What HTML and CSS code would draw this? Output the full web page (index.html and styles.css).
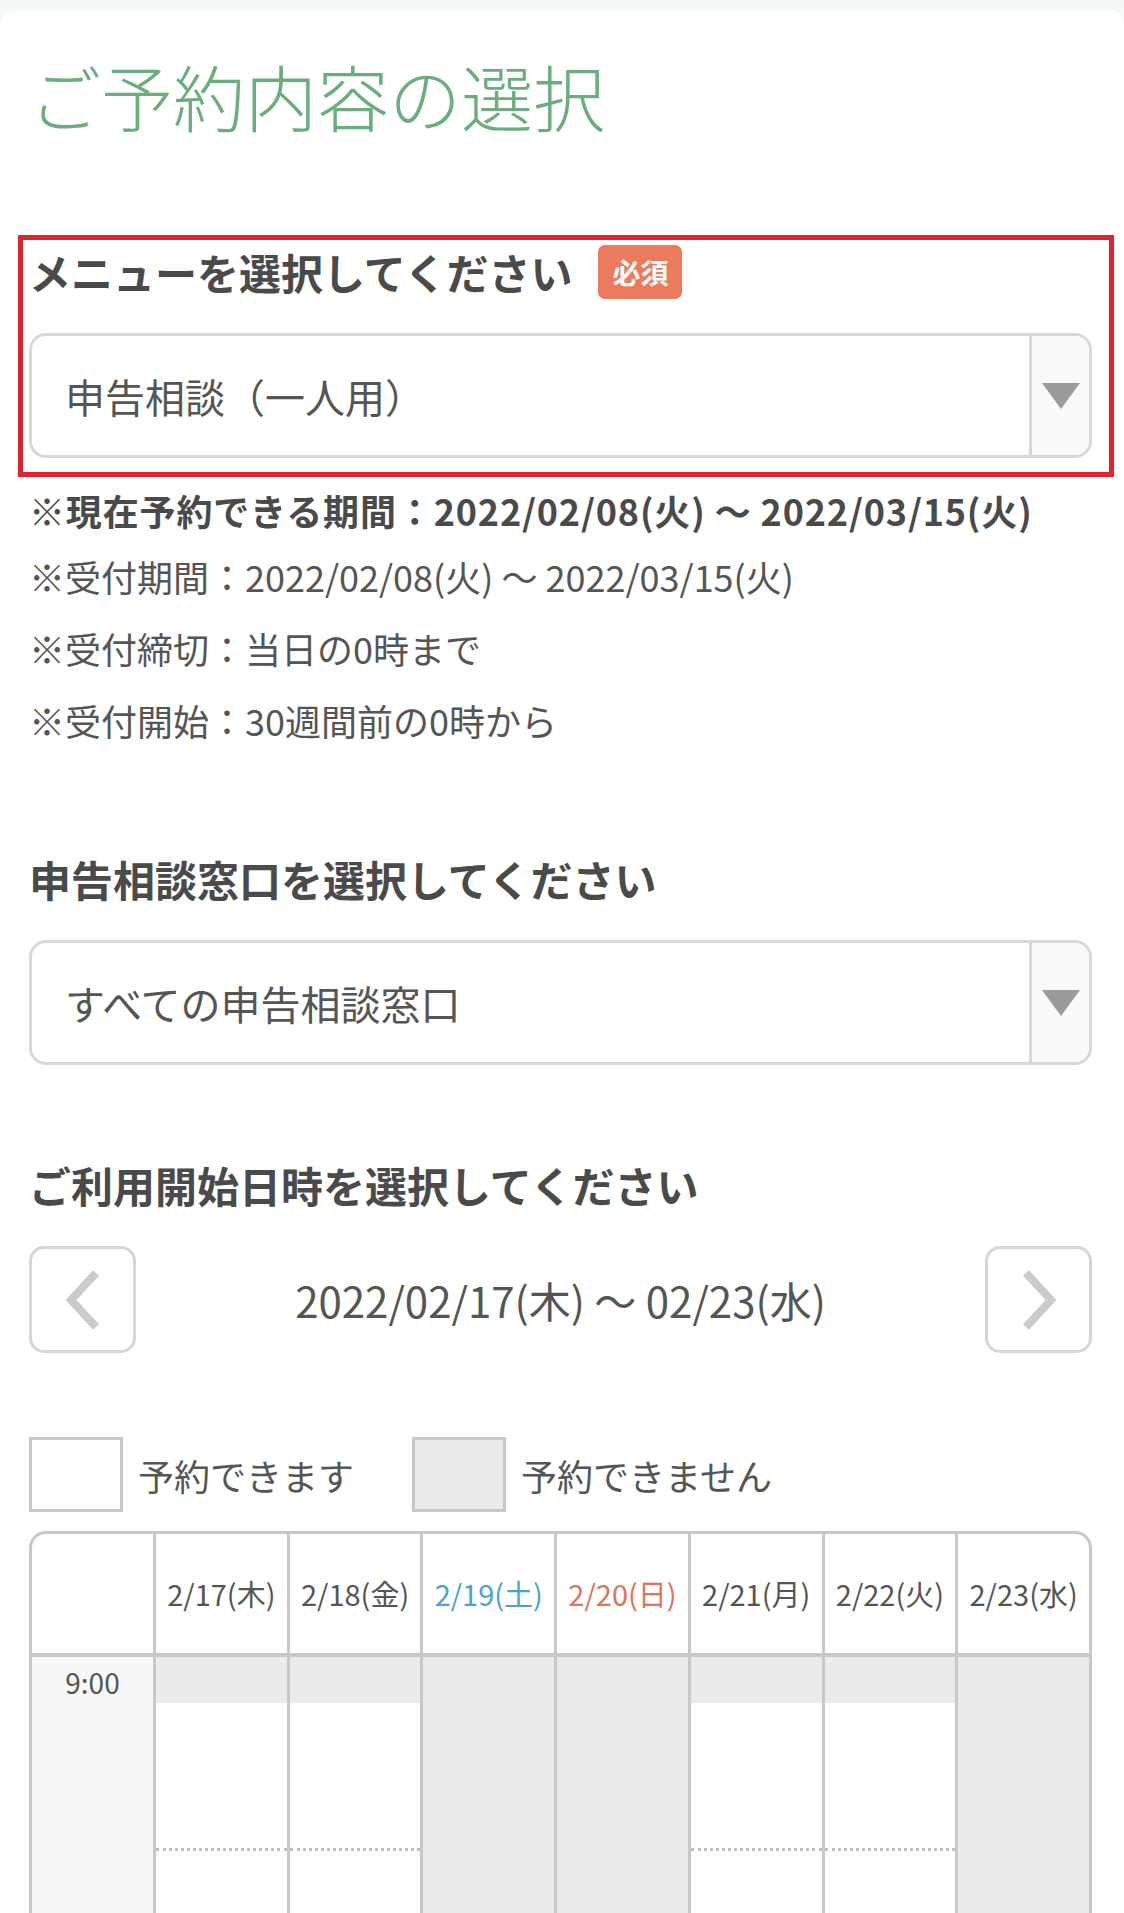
FILE: index.html
```html
<!DOCTYPE html>
<html lang="ja">
<head>
  <meta charset="UTF-8" />
  <meta name="viewport" content="width=device-width, initial-scale=1.0" />
  <title>ご予約内容の選択</title>
  <link rel="stylesheet" href="styles.css">
</head>
<body>
  <div class="card">
    <h1 class="page-title">ご予約内容の選択</h1>

    <div class="field field-menu">
      <div class="field-head">
        <p class="field-label">メニューを選択してください</p>
        <span class="badge">必須</span>
      </div>
      <div class="select">
        <div class="select-value">申告相談（一人用）</div>
        <div class="select-arrow"><span class="triangle"></span></div>
      </div>
      <span class="highlight"></span>
    </div>

    <div class="notes">
      <p class="note note-strong">※現在予約できる期間：2022/02/08(火) 〜 2022/03/15(火)</p>
      <p class="note">※受付期間：2022/02/08(火) 〜 2022/03/15(火)</p>
      <p class="note">※受付締切：当日の0時まで</p>
      <p class="note">※受付開始：30週間前の0時から</p>
    </div>

    <div class="field field-window">
      <div class="field-head">
        <p class="field-label">申告相談窓口を選択してください</p>
      </div>
      <div class="select">
        <div class="select-value">すべての申告相談窓口</div>
        <div class="select-arrow"><span class="triangle"></span></div>
      </div>
    </div>

    <div class="field field-date">
      <div class="field-head">
        <p class="field-label">ご利用開始日時を選択してください</p>
      </div>
      <div class="date-nav">
        <button class="nav-btn">
          <svg width="34" height="60" viewBox="0 0 34 60"><polyline points="30,3 5,30 30,57" fill="none" stroke="#cbcbcb" stroke-width="8"/></svg>
        </button>
        <div class="date-range">2022/02/17(木) 〜 02/23(水)</div>
        <button class="nav-btn">
          <svg width="34" height="60" viewBox="0 0 34 60"><polyline points="4,3 29,30 4,57" fill="none" stroke="#cbcbcb" stroke-width="8"/></svg>
        </button>
      </div>
    </div>

    <div class="legend">
      <div class="legend-item"><span class="swatch"></span>予約できます</div>
      <div class="legend-item"><span class="swatch swatch-off"></span>予約できません</div>
    </div>

    <div class="schedule">
      <div class="schedule-head">
        <div class="head-cell head-corner"></div>
        <div class="head-cell">2/17(木)</div>
        <div class="head-cell">2/18(金)</div>
        <div class="head-cell sat">2/19(土)</div>
        <div class="head-cell sun">2/20(日)</div>
        <div class="head-cell">2/21(月)</div>
        <div class="head-cell">2/22(火)</div>
        <div class="head-cell">2/23(水)</div>
      </div>
      <div class="schedule-body">
        <div class="time-col">
          <div class="time">9:00</div>
        </div>
        <div class="day-col">
          <div class="half"><div class="slot-off"></div></div>
          <div class="half"></div>
        </div>
        <div class="day-col">
          <div class="half"><div class="slot-off"></div></div>
          <div class="half"></div>
        </div>
        <div class="day-col closed">
          <div class="half"></div>
          <div class="half"></div>
        </div>
        <div class="day-col closed">
          <div class="half"></div>
          <div class="half"></div>
        </div>
        <div class="day-col">
          <div class="half"><div class="slot-off"></div></div>
          <div class="half"></div>
        </div>
        <div class="day-col">
          <div class="half"><div class="slot-off"></div></div>
          <div class="half"></div>
        </div>
        <div class="day-col closed">
          <div class="half"></div>
          <div class="half"></div>
        </div>
      </div>
    </div>
  </div>
</body>
</html>
```

FILE: styles.css
```css
body {
  margin: 0;
  background: #f5faf7;
  font-family: "Noto Sans CJK JP", "Noto Sans", sans-serif;
  color: #555;
}
p {
  margin: 0;
}
.card {
  margin-top: 11px;
  background: #fff;
  border-radius: 14px 14px 0 0;
  padding: 48px 32px 0 29px;
}
.page-title {
  margin: 0;
  font-size: 72px;
  line-height: 72px;
  font-weight: 300;
  color: #6aae7e;
}
.field {
  position: relative;
}
.field-menu {
  margin-top: 114px;
}
.field-window {
  margin-top: 96px;
}
.field-date {
  margin-top: 93px;
}
.field-head {
  display: flex;
  align-items: center;
  gap: 26px;
  height: 54px;
}
.field-label {
  font-size: 42px;
  line-height: 1;
  font-weight: bold;
  color: #4a4a4a;
}
.badge {
  display: flex;
  align-items: center;
  justify-content: center;
  width: 84px;
  height: 54px;
  border-radius: 7px;
  background: #ec7b5d;
  color: #fff;
  font-size: 28px;
  font-weight: bold;
}
.select {
  display: flex;
  margin-top: 34px;
  height: 125px;
  box-sizing: border-box;
  border: 3px solid #d8d8d8;
  border-radius: 17px;
  overflow: hidden;
}
.select-value {
  flex: 1;
  display: flex;
  align-items: center;
  padding-left: 33px;
  font-size: 40px;
  color: #555;
}
.select-arrow {
  width: 60px;
  box-sizing: border-box;
  border-left: 3px solid #d8d8d8;
  background: #fafafa;
  display: flex;
  align-items: center;
  justify-content: center;
}
.triangle {
  width: 0;
  height: 0;
  border-left: 19px solid transparent;
  border-right: 19px solid transparent;
  border-top: 26px solid #9a9a9a;
}
.highlight {
  position: absolute;
  top: -10px;
  left: -11px;
  right: -22px;
  bottom: -19px;
  border: 5px solid #e3202b;
  pointer-events: none;
}
.notes {
  margin-top: 22px;
}
.note {
  font-size: 36px;
  line-height: 72px;
  color: #555;
}
.note-strong {
  line-height: 60px;
  font-weight: bold;
  letter-spacing: 0.85px;
  color: #4a4a4a;
}
.date-nav {
  display: flex;
  align-items: center;
  justify-content: space-between;
  margin-top: 34px;
}
.nav-btn {
  width: 107px;
  height: 107px;
  padding: 0;
  border: 3px solid #d6d6d6;
  border-radius: 15px;
  background: #fff;
  display: flex;
  align-items: center;
  justify-content: center;
}
.date-range {
  font-size: 42px;
  color: #555;
}
.legend {
  display: flex;
  align-items: center;
  gap: 58px;
  margin-top: 84px;
}
.legend-item {
  display: flex;
  align-items: center;
  gap: 15px;
  font-size: 36px;
  line-height: 1;
  color: #555;
}
.swatch {
  width: 94px;
  height: 75px;
  box-sizing: border-box;
  border: 3px solid #c8c8c8;
  background: #fff;
}
.swatch-off {
  background: #ebebeb;
}
.schedule {
  margin-top: 19px;
  border: 3px solid #c8c8c8;
  border-bottom: none;
  border-radius: 17px 17px 0 0;
  overflow: hidden;
}
.schedule-head,
.schedule-body {
  display: grid;
  grid-template-columns: 121px repeat(7, 1fr);
}
.schedule-head {
  border-bottom: 4px solid #c8c8c8;
}
.head-cell {
  height: 119px;
  display: flex;
  align-items: center;
  justify-content: center;
  border-left: 3px solid #c8c8c8;
  font-size: 29px;
  line-height: 1;
  color: #555;
  white-space: nowrap;
}
.head-corner {
  border-left: none;
}
.head-cell.sat {
  color: #4aa3d6;
}
.head-cell.sun {
  color: #e07358;
}
.time-col {
  background: #f8f8f8;
}
.time {
  padding-top: 9px;
  text-align: center;
  font-size: 28px;
  line-height: 1.2;
  color: #555;
}
.day-col {
  border-left: 3px solid #c8c8c8;
}
.half {
  height: 194px;
  box-sizing: border-box;
  border-bottom: 3px dotted #c0c0c0;
}
.slot-off {
  height: 46px;
  background: #ebebeb;
}
.day-col.closed {
  background: #ebebeb;
}
.day-col.closed .half {
  border-bottom-color: transparent;
}
```
